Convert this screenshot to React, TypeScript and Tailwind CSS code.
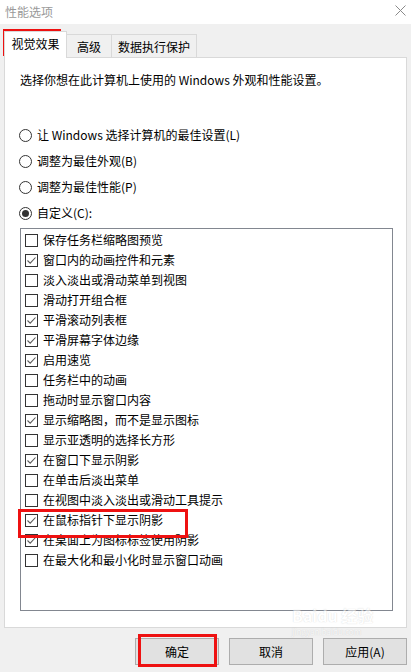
import React from "react";

const items: { label: string; checked: boolean }[] = [
  { label: "保存任务栏缩略图预览", checked: false },
  { label: "窗口内的动画控件和元素", checked: true },
  { label: "淡入淡出或滑动菜单到视图", checked: false },
  { label: "滑动打开组合框", checked: false },
  { label: "平滑滚动列表框", checked: true },
  { label: "平滑屏幕字体边缘", checked: true },
  { label: "启用速览", checked: true },
  { label: "任务栏中的动画", checked: false },
  { label: "拖动时显示窗口内容", checked: false },
  { label: "显示缩略图，而不是显示图标", checked: true },
  { label: "显示亚透明的选择长方形", checked: false },
  { label: "在窗口下显示阴影", checked: true },
  { label: "在单击后淡出菜单", checked: false },
  { label: "在视图中淡入淡出或滑动工具提示", checked: false },
  { label: "在鼠标指针下显示阴影", checked: true },
  { label: "在桌面上为图标标签使用阴影", checked: true },
  { label: "在最大化和最小化时显示窗口动画", checked: false },
];

const radios = [
  { label: "让 Windows 选择计算机的最佳设置(L)", on: false },
  { label: "调整为最佳外观(B)", on: false },
  { label: "调整为最佳性能(P)", on: false },
  { label: "自定义(C):", on: true },
];

function Checkbox({ checked }: { checked: boolean }) {
  return (
    <span className="w-[13px] h-[13px] shrink-0 border border-[#333333] bg-white flex items-center justify-center">
      {checked && (
        <svg width="11" height="11" viewBox="0 0 11 11">
          <path d="M1.5 5.5 L4.2 8.2 L9.5 2.5" fill="none" stroke="#5a5a5a" strokeWidth="1.1" />
        </svg>
      )}
    </span>
  );
}

function Radio({ on }: { on: boolean }) {
  return (
    <span className="w-[13px] h-[13px] shrink-0 rounded-full border border-[#333333] bg-white flex items-center justify-center">
      {on && <span className="w-[7px] h-[7px] rounded-full bg-[#333333]" />}
    </span>
  );
}

export default function App() {
  return (
    <div
      className="relative w-[411px] h-[672px] overflow-hidden bg-[#f0f0f0] text-[12px] text-black"
      style={{ fontFamily: '"Noto Sans CJK SC", "Noto Sans", sans-serif' }}
    >
      {/* Title bar */}
      <div className="h-[24px] bg-white flex items-center justify-between pl-[5px] pr-[5px]">
        <span className="text-[12px] leading-[16px] text-[#999999]">性能选项</span>
        <svg width="11" height="11" viewBox="0 0 11 11" className="mb-[4px]">
          <path d="M0.5 0.5 L10.5 10.5 M10.5 0.5 L0.5 10.5" stroke="#8a8a8a" strokeWidth="1" />
        </svg>
      </div>

      {/* Tabs */}
      <div className="flex items-end h-[34px] pl-[4px] pt-[7px]">
        <div className="relative z-10 h-[27px] w-[63px] bg-white border border-b-0 border-[#d9d9d9] flex items-center justify-center leading-[16px] pb-[2px]">
          视觉效果
        </div>
        <div className="h-[24px] w-[45px] border border-l-0 border-b-0 border-[#d9d9d9] flex items-center justify-center leading-[16px]">
          高级
        </div>
        <div className="h-[24px] w-[85px] border border-l-0 border-b-0 border-[#d9d9d9] flex items-center justify-center leading-[16px]">
          数据执行保护
        </div>
      </div>

      {/* Panel */}
      <div className="mx-[4px] -mt-px h-[571px] bg-white border border-[#d9d9d9] flex flex-col">
        <p className="pl-[15px] pt-[14px] leading-[16px]">选择你想在此计算机上使用的 Windows 外观和性能设置。</p>

        <div className="flex flex-col pt-[34px] pl-[14px]">
          {radios.map((r) => (
            <div key={r.label} className="h-[26px] flex items-center gap-[5px]">
              <Radio on={r.on} />
              <span className="leading-[16px]">{r.label}</span>
            </div>
          ))}
        </div>

        <div className="ml-[15px] mt-[2px] w-[373px] h-[383px] border border-[#828790] pt-px">
          {items.map((it) => (
            <div key={it.label} className="h-[20px] flex items-center pl-[4px] gap-[5px]">
              <Checkbox checked={it.checked} />
              <span className="leading-[16px] whitespace-nowrap">{it.label}</span>
            </div>
          ))}
        </div>
      </div>

      {/* Buttons */}
      <div className="flex justify-end gap-[10px] pr-[4px] pt-[10px]">
        {["确定", "取消", "应用(A)"].map((b) => (
          <button
            key={b}
            className="w-[84px] h-[27px] bg-[#e1e1e1] border border-[#adadad] flex items-center justify-center leading-[16px]"
          >
            {b}
          </button>
        ))}
      </div>

      {/* Watermark, kept above the buttons */}
      <div className="absolute left-[292px] top-[606px] flex flex-col items-start gap-[2px] pointer-events-none opacity-50">
        <span className="text-[16px] font-bold leading-[19px] text-white [text-shadow:0_0_1px_#aaaaaa]">Baidu 经验</span>
        <span className="text-[8px] leading-[10px] text-white [text-shadow:0_0_1px_#aaaaaa]">jingyan.baidu.com</span>
      </div>

      {/* Red annotation boxes */}
      <div className="absolute left-[3px] top-[29px] w-[58px] h-[27px] border-[3px] border-[#ee1111] pointer-events-none" />
      <div className="absolute left-[18px] top-[509px] w-[170px] h-[29px] border-[3px] border-[#ee1111] pointer-events-none" />
      <div className="absolute left-[138px] top-[634px] w-[79px] h-[33px] border-[3px] border-[#ee1111] pointer-events-none" />
    </div>
  );
}
